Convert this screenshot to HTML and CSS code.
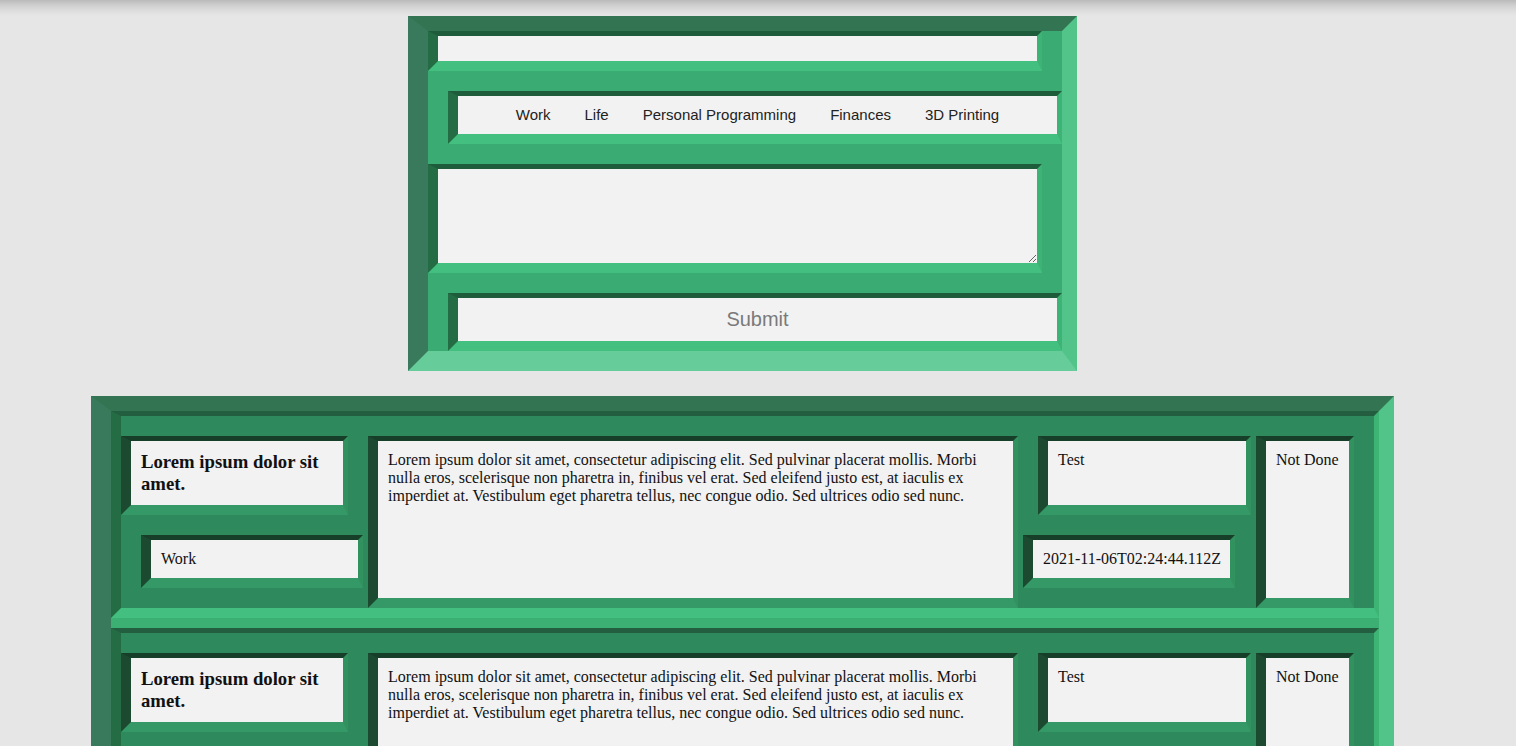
FILE: index.html
```html
<!DOCTYPE html>
<html lang="en">
<head>
<meta charset="utf-8">
<title>Entries</title>
<link rel="stylesheet" href="styles.css">
</head>
<body>
<div class="topshade"></div>
<main class="page">
  <form class="entry-form">
    <input class="bevel field title-input" type="text" aria-label="Title">
    <nav class="bevel shift categories">
      <span>Work</span>
      <span>Life</span>
      <span>Personal Programming</span>
      <span>Finances</span>
      <span>3D Printing</span>
    </nav>
    <textarea class="bevel field body-input" aria-label="Body"></textarea>
    <button class="bevel shift submit" type="button">Submit</button>
  </form>

  <section class="entries">
    <article class="bevel entry">
      <div class="box title-box"><h3>Lorem ipsum dolor sit amet.</h3></div>
      <div class="box cat-box">Work</div>
      <div class="box desc-box">Lorem ipsum dolor sit amet, consectetur adipiscing elit. Sed pulvinar placerat mollis. Morbi nulla eros, scelerisque non pharetra in, finibus vel erat. Sed eleifend justo est, at iaculis ex imperdiet at. Vestibulum eget pharetra tellus, nec congue odio. Sed ultrices odio sed nunc.</div>
      <div class="box test-box">Test</div>
      <div class="box date-box">2021-11-06T02:24:44.112Z</div>
      <div class="box status-box">Not Done</div>
    </article>
    <article class="bevel entry">
      <div class="box title-box"><h3>Lorem ipsum dolor sit amet.</h3></div>
      <div class="box cat-box">Work</div>
      <div class="box desc-box">Lorem ipsum dolor sit amet, consectetur adipiscing elit. Sed pulvinar placerat mollis. Morbi nulla eros, scelerisque non pharetra in, finibus vel erat. Sed eleifend justo est, at iaculis ex imperdiet at. Vestibulum eget pharetra tellus, nec congue odio. Sed ultrices odio sed nunc.</div>
      <div class="box test-box">Test</div>
      <div class="box date-box">2021-11-06T02:24:44.112Z</div>
      <div class="box status-box">Not Done</div>
    </article>
  </section>
</main>
</body>
</html>
```

FILE: styles.css
```css
html, body {
  margin: 0;
  padding: 0;
}

body {
  background: #e6e6e6;
  font-family: "Liberation Serif", "Times New Roman", serif;
  color: #111;
}

.topshade {
  height: 16px;
  background: linear-gradient(#bababa 0, #cecece 5px, #dbdbdb 10px, #e3e3e3 14px, #e6e6e6 16px);
}

.page {
  display: flex;
  flex-direction: column;
  align-items: center;
  gap: 25px;
  padding-right: 31px;
}

/* shared 3D bevel */
.bevel {
  box-sizing: border-box;
  border-style: solid;
  border-width: 5px 5px 10px 10px;
}

/* ---------- form ---------- */
.entry-form {
  width: 669px;
  box-sizing: border-box;
  margin: 0;
  border-style: solid;
  border-width: 15px 15px 20px 20px;
  border-color: #337553 #52c48a #66cc99 #3a7a5c;
  background: #3aab72;
  display: flex;
  flex-direction: column;
  gap: 20px;
}

.entry-form .bevel {
  width: 614px;
  margin: 0;
  background: #f2f2f2;
  border-color: #1f5c3c #3eb376 #43c07f #236c44;
}

.entry-form .shift {
  margin-left: 20px;
}

.field {
  display: block;
  outline: none;
  padding: 2px 4px;
  font-family: "Liberation Sans", Arial, sans-serif;
  font-size: 14px;
  color: #222;
}

.title-input {
  height: 40px;
}

.body-input {
  height: 109px;
}

.categories {
  height: 53px;
  display: flex;
  justify-content: center;
  align-items: center;
  gap: 34px;
  padding-bottom: 1px;
  font-family: "Liberation Sans", Arial, sans-serif;
  font-size: 15px;
  color: #222;
}

.submit {
  height: 58px;
  padding: 0;
  font-family: "Liberation Sans", Arial, sans-serif;
  font-size: 20px;
  color: #7a7a7a;
  cursor: pointer;
}

/* ---------- entries list ---------- */
.entries {
  width: 1303px;
  box-sizing: border-box;
  border-style: solid;
  border-width: 15px 15px 20px 20px;
  border-color: #337553 #52c48a #66cc99 #3a7a5c;
  background: #3cb073;
  display: flex;
  flex-direction: column;
  gap: 10px;
}

.entry {
  background: #2e8a5c;
  border-color: #235e40 #3db374 #43c07f #236c44;
  display: grid;
  grid-template-columns: 247px 650px 238px 118px;
  grid-template-rows: auto auto;
}

.box {
  box-sizing: border-box;
  border-style: solid;
  border-width: 5px 5px 10px 10px;
  border-color: #163e29 #31915f #349966 #1b4a30;
  background: #f2f2f2;
  padding: 10px;
  font-size: 16px;
  line-height: 18px;
}

.title-box {
  grid-column: 1;
  grid-row: 1;
  margin: 20px 20px 0 0;
}

.title-box h3 {
  margin: 0;
  font-size: 18.72px;
  line-height: 22px;
  font-weight: bold;
}

.cat-box {
  grid-column: 1;
  grid-row: 2;
  margin: 20px 5px 20px 20px;
}

.desc-box {
  grid-column: 2;
  grid-row: 1 / 3;
  margin: 20px 0 0 0;
}

.test-box {
  grid-column: 3;
  grid-row: 1;
  margin: 20px 5px 0 20px;
}

.date-box {
  grid-column: 3;
  grid-row: 2;
  margin: 20px 21px 20px 5px;
  white-space: nowrap;
}

.status-box {
  grid-column: 4;
  grid-row: 1 / 3;
  margin: 20px 20px 0 0;
}
```
